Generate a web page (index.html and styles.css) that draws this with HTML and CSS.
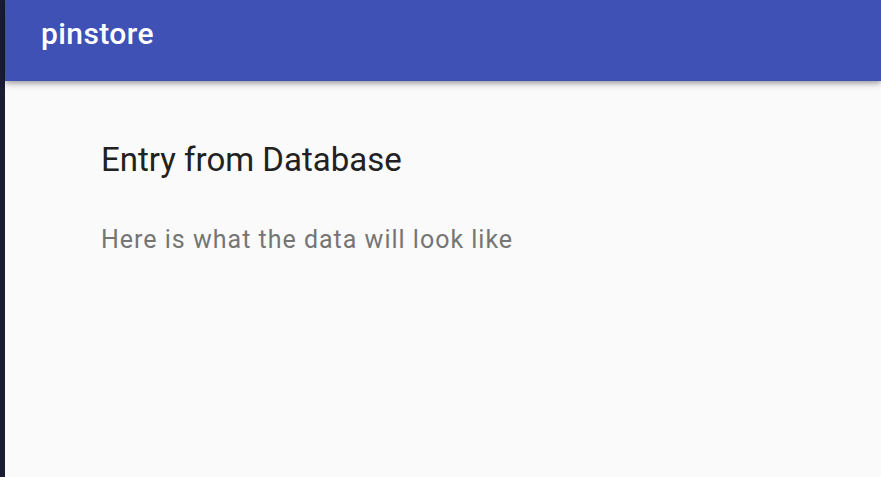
FILE: index.html
```html
<!DOCTYPE html>
<html>
<head>
<meta charset="utf-8">
<link rel="stylesheet" href="styles.css">
</head>
<body>
<div class="frame">
  <div class="edge"></div>
  <div class="app">
    <header class="appbar"><span class="title">pinstore</span></header>
    <main class="content">
      <h1 class="heading">Entry from Database</h1>
      <p class="body">Here is what the data will look like</p>
    </main>
  </div>
</div>
</body>
</html>
```
FILE: styles.css
```css
html, body { margin: 0; padding: 0; height: 100%; }
body { font-family: Roboto, "Noto Sans", sans-serif; background: #fafafa; }
.frame { display: flex; height: 100%; }
.edge { width: 5px; background: #1b1d37; flex: none; }
.app { flex: 1; background: #fafafa; display: flex; flex-direction: column; }
.appbar {
  height: 81px; box-sizing: border-box; background: #3f51b5; display: flex; align-items: flex-start;
  padding: 16px 0 0 36px;
  box-shadow: 0 2px 4px -1px rgba(0,0,0,0.2), 0 4px 5px 0 rgba(0,0,0,0.14), 0 1px 10px 0 rgba(0,0,0,0.12);
  position: relative; z-index: 1;
}
.title { color: #fff; font-size: 30px; font-weight: 500; line-height: 36px; letter-spacing: 0.4px; }
.content { padding: 59px 0 0 96px; }
.heading { margin: 0; font-size: 33px; font-weight: 400; color: #212121; line-height: 40px; }
.body { margin: 44px 0 0; font-size: 25px; color: #757575; line-height: 32px; letter-spacing: 1px; }
```
